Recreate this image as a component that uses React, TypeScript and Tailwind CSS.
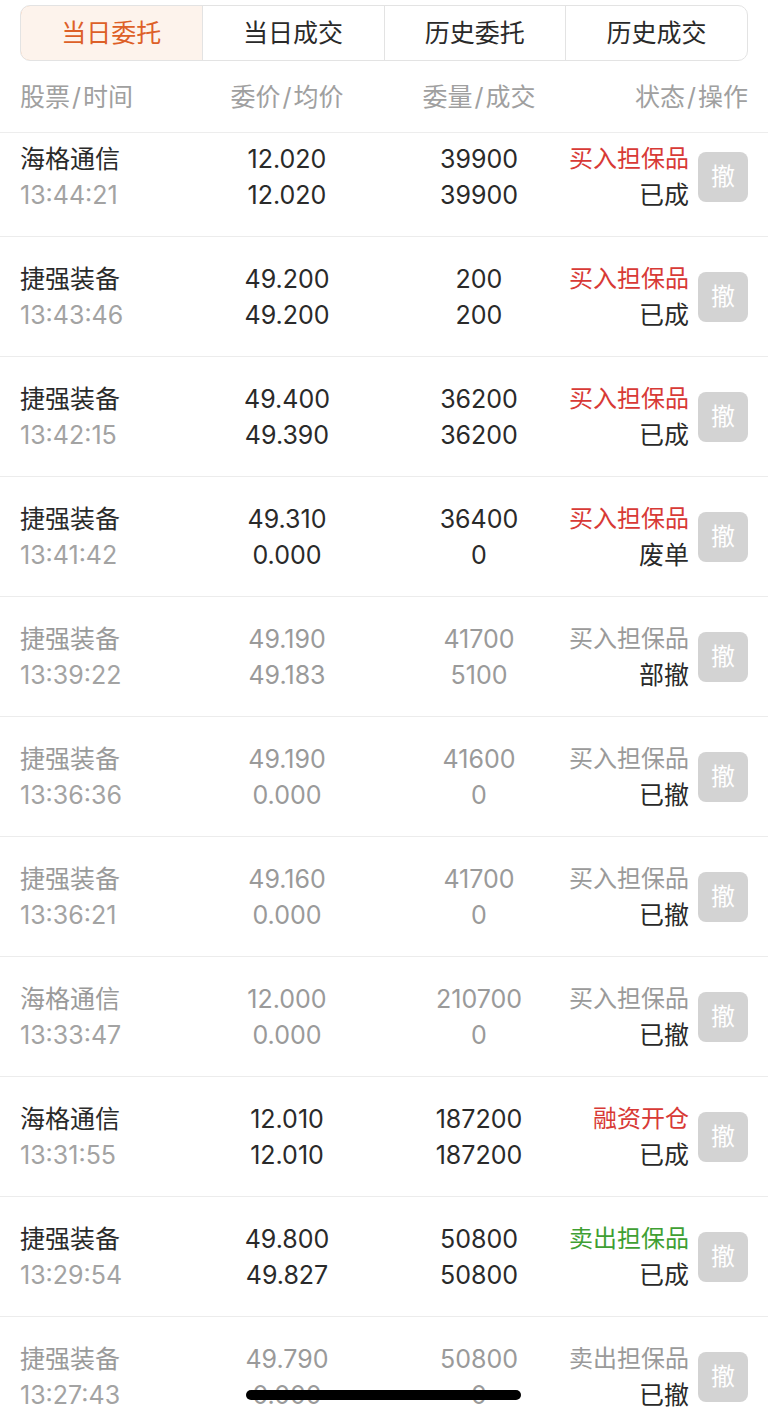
import React from "react";

type Row = {
  name: string;
  time: string;
  p1: string;
  p2: string;
  q1: string;
  q2: string;
  type: string;
  typeColor: "red" | "green" | "gray";
  status: string;
  dim: boolean;
};

const rows: Row[] = [
  { name: "海格通信", time: "13:44:21", p1: "12.020", p2: "12.020", q1: "39900", q2: "39900", type: "买入担保品", typeColor: "red", status: "已成", dim: false },
  { name: "捷强装备", time: "13:43:46", p1: "49.200", p2: "49.200", q1: "200", q2: "200", type: "买入担保品", typeColor: "red", status: "已成", dim: false },
  { name: "捷强装备", time: "13:42:15", p1: "49.400", p2: "49.390", q1: "36200", q2: "36200", type: "买入担保品", typeColor: "red", status: "已成", dim: false },
  { name: "捷强装备", time: "13:41:42", p1: "49.310", p2: "0.000", q1: "36400", q2: "0", type: "买入担保品", typeColor: "red", status: "废单", dim: false },
  { name: "捷强装备", time: "13:39:22", p1: "49.190", p2: "49.183", q1: "41700", q2: "5100", type: "买入担保品", typeColor: "gray", status: "部撤", dim: true },
  { name: "捷强装备", time: "13:36:36", p1: "49.190", p2: "0.000", q1: "41600", q2: "0", type: "买入担保品", typeColor: "gray", status: "已撤", dim: true },
  { name: "捷强装备", time: "13:36:21", p1: "49.160", p2: "0.000", q1: "41700", q2: "0", type: "买入担保品", typeColor: "gray", status: "已撤", dim: true },
  { name: "海格通信", time: "13:33:47", p1: "12.000", p2: "0.000", q1: "210700", q2: "0", type: "买入担保品", typeColor: "gray", status: "已撤", dim: true },
  { name: "海格通信", time: "13:31:55", p1: "12.010", p2: "12.010", q1: "187200", q2: "187200", type: "融资开仓", typeColor: "red", status: "已成", dim: false },
  { name: "捷强装备", time: "13:29:54", p1: "49.800", p2: "49.827", q1: "50800", q2: "50800", type: "卖出担保品", typeColor: "green", status: "已成", dim: false },
  { name: "捷强装备", time: "13:27:43", p1: "49.790", p2: "0.000", q1: "50800", q2: "0", type: "卖出担保品", typeColor: "gray", status: "已撤", dim: true },
];

const tabs = ["当日委托", "当日成交", "历史委托", "历史成交"];

function TypeText({ row }: { row: Row }) {
  const cls =
    row.typeColor === "red"
      ? "text-[#d83a36]"
      : row.typeColor === "green"
      ? "text-[#3f9f33]"
      : "text-[#9a9a9a]";
  return <div className={`whitespace-nowrap text-[24px] ${cls}`}>{row.type}</div>;
}

function Label({ a, b }: { a: string; b: string }) {
  return (
    <span className="whitespace-nowrap">
      {a}
      <span className="mx-[2px]">/</span>
      {b}
    </span>
  );
}

export default function App() {
  return (
    <div
      className="relative w-[768px] h-[1415px] overflow-hidden bg-white text-[25px] leading-[36px] text-[#2a2a2a]"
      style={{ fontFamily: 'Inter, "Noto Sans CJK SC", sans-serif' }}
    >
      {/* Header */}
      <div className="h-[133px] border-b border-[#ededed] px-5 pt-[5px]">
        <div className="flex h-[56px] rounded-[10px] border border-[#e3e3e3] overflow-hidden">
          {tabs.map((t, i) => (
            <div
              key={t}
              className={
                i === 0
                  ? "flex-1 flex items-center justify-center bg-[#fdf3ec] text-[#dd6028] border border-[#ebb594] rounded-l-[10px] -m-px"
                  : "flex-1 flex items-center justify-center border-l border-[#e3e3e3] text-[#2a2a2a]"
              }
            >
              {t}
            </div>
          ))}
        </div>
        <div className="flex h-[72px] items-center text-[#a0a0a0]">
          <div className="w-[190px]">
            <Label a="股票" b="时间" />
          </div>
          <div className="w-[154px] text-center">
            <Label a="委价" b="均价" />
          </div>
          <div className="w-[230px] text-center">
            <Label a="委量" b="成交" />
          </div>
          <div className="flex-1 text-right">
            <Label a="状态" b="操作" />
          </div>
        </div>
      </div>

      {/* List */}
      <div className="overflow-hidden">
        <div className="-mt-[16px]">
          {rows.map((r, idx) => {
            const main = r.dim ? "text-[#9a9a9a]" : "text-[#2a2a2a]";
            return (
              <div
                key={idx}
                className="flex h-[120px] items-center border-b border-[#ececec] px-5"
              >
                <div className="w-[190px]">
                  <div className={main}>{r.name}</div>
                  <div className="text-[#a3a3a3]">{r.time}</div>
                </div>
                <div className={`w-[154px] text-center ${main}`}>
                  <div>{r.p1}</div>
                  <div>{r.p2}</div>
                </div>
                <div className={`w-[230px] text-center ${main}`}>
                  <div>{r.q1}</div>
                  <div>{r.q2}</div>
                </div>
                <div className="flex-1 min-w-0 flex flex-col items-end">
                  <TypeText row={r} />
                  <div className="whitespace-nowrap text-[#2a2a2a]">{r.status}</div>
                </div>
                <div className="ml-[9px] flex h-[50px] w-[50px] items-center justify-center rounded-[8px] bg-[#d3d3d3] text-white text-[24px]">
                  撤
                </div>
              </div>
            );
          })}
        </div>
      </div>

      {/* Home indicator */}
      <div className="absolute left-[246px] top-[1390px] h-[10px] w-[275px] rounded-full bg-black" />
    </div>
  );
}
